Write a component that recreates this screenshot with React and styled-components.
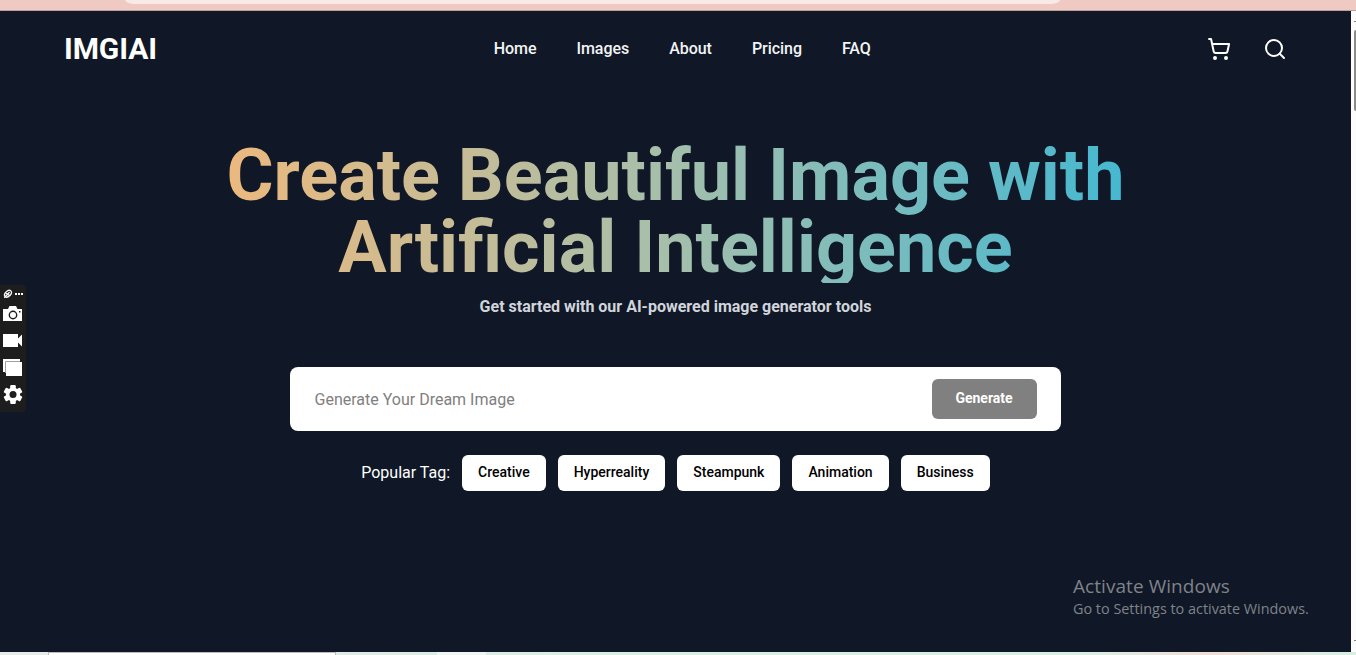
import React from "react";
import styled, { createGlobalStyle } from "styled-components";
import { ShoppingCart, Search } from "lucide-react";

const GlobalStyle = createGlobalStyle`
  *, *::before, *::after { box-sizing: border-box; }
  html, body { margin: 0; padding: 0; overflow: hidden; }
  body { background: #101726; font-family: Roboto, "Liberation Sans", sans-serif; }
  button, input { font-family: inherit; margin: 0; }
`;

const Screen = styled.div`
  position: relative;
  display: flex;
  flex-direction: column;
  width: 1356px;
  height: 655px;
  overflow: hidden;
`;

const BrowserBar = styled.div`
  flex: none;
  height: 11px;
  padding-left: 125px;
  background: #efcac2;
  border-bottom: 1px solid #bf9f99;
`;

const AddressField = styled.div`
  width: 935px;
  height: 4px;
  background: #f9e9e8;
  border-radius: 0 0 10px 10px / 0 0 4px 4px;
`;

const Viewport = styled.div`
  flex: 1;
  display: flex;
  min-height: 0;
`;

const Page = styled.div`
  width: 1351px;
  background: #101726;
`;

const Scrollbar = styled.div`
  flex: 1;
  display: flex;
  flex-direction: column;
  align-items: flex-end;
  background: #fcfcfc;
`;

const ScrollArrow = styled.div`
  width: 2px;
  height: 1px;
  margin: ${(p) => (p.$down ? "auto 0 11px" : "10px 0 0")};
  background: #858585;
`;

const ScrollThumb = styled.div`
  width: 2px;
  height: 81px;
  margin-top: 8px;
  background: #8b8b8b;
  border-radius: 2px 0 0 2px;
`;

const Header = styled.header`
  display: grid;
  grid-template-columns: 1fr auto 1fr;
  align-items: center;
  height: 76px;
  padding: 0 64px;
`;

const Logo = styled.div`
  color: #fff;
  font-size: 30px;
  line-height: 36px;
  font-weight: 700;
  letter-spacing: -0.1px;
`;

const Nav = styled.nav`
  display: flex;
  gap: 40px;
  margin-left: 13.5px;
`;

const NavLink = styled.a`
  color: #f3f4f6;
  font-size: 16px;
  line-height: 24px;
  font-weight: 500;
  letter-spacing: -0.04px;
`;

const Actions = styled.div`
  display: flex;
  justify-content: flex-end;
  gap: 32px;
  color: #fff;
`;

const Hero = styled.main`
  display: flex;
  flex-direction: column;
  align-items: center;
  padding-top: 52px;
`;

const Title = styled.h1`
  width: 900px;
  height: 144px;
  margin: 0;
  padding-top: 1px;
  font-size: 72px;
  line-height: 72px;
  font-weight: 700;
  text-align: center;
  color: transparent;
  background: linear-gradient(to right, #ecb97e, #a4bfac 50%, #45b8d1);
  background-clip: text;
  -webkit-background-clip: text;
`;

const Subtitle = styled.p`
  margin: 12px 0 0;
  color: #d1d5db;
  font-size: 16px;
  line-height: 24px;
  font-weight: 700;
`;

const Prompt = styled.form`
  display: flex;
  align-items: center;
  width: 771px;
  height: 64px;
  margin-top: 48px;
  padding: 0 24px;
  background: #fff;
  border-radius: 8px;
`;

const PromptInput = styled.input`
  flex: 1;
  height: 40px;
  padding: 0 0 0 0.5px;
  border: 0;
  outline: 0;
  background: transparent;
  font-size: 16px;
  &::placeholder { color: #808080; opacity: 1; }
`;

const GenerateButton = styled.button`
  width: 105px;
  height: 40px;
  padding: 0 1px 2px 0;
  border: 0;
  border-radius: 6px;
  background: #808080;
  color: #fff;
  font-size: 14px;
  font-weight: 700;
`;

const Tags = styled.div`
  display: flex;
  align-items: center;
  gap: 12px;
  margin-top: 24px;
`;

const TagsLabel = styled.span`
  color: #fff;
  font-size: 16px;
  line-height: 24px;
`;

const Tag = styled.button`
  height: 36px;
  padding: 0 16px 2px;
  border: 0;
  border-radius: 6px;
  background: #fff;
  color: #000;
  font-size: 14px;
  font-weight: 500;
`;

const Taskbar = styled.div`
  flex: none;
  display: flex;
  height: 3px;
  padding-left: 48px;
  background: linear-gradient(to right, #e6ebe7 0, #deece4 400px, #d9efe3 600px, #d9efe3 1080px, #f0ddd4 1215px, #d9efe3 1330px);
`;

const TaskWindow = styled.div`
  width: 288px;
  background: #fff;
  border: 1px solid #bcbcbc;
  border-bottom: 0;
`;

const TaskItem = styled.div`
  width: 49px;
  margin-left: 101px;
  background: #f0f6f2;
`;

const CaptureBar = styled.aside`
  position: absolute;
  left: 0;
  top: 285px;
  width: 26px;
  height: 127px;
  background: #1d1d1d;
  border-radius: 0 4px 4px 0;
  svg { display: block; }
`;

const Watermark = styled.div`
  position: absolute;
  left: 1073px;
  top: 573px;
  color: #7f838a;
  font-family: "Open Sans", "Noto Sans", sans-serif;
  white-space: nowrap;
`;

const WatermarkTitle = styled.div`
  font-size: 19px;
  line-height: 26px;
  letter-spacing: 0.06px;
`;

const WatermarkText = styled.div`
  font-size: 14.4px;
  line-height: 19px;
`;

function CaptureIcons() {
  return (
    <svg width="26" height="127" viewBox="0 0 26 127" fill="#fff">
      <g fill="none" stroke="#fff" strokeWidth="1.3">
        <ellipse cx="8" cy="8.7" rx="4" ry="2.6" transform="rotate(-45 8 8.7)" />
        <path d="M4.3 12.8 9.6 7M5 7.5l5 3.3" />
      </g>
      <rect x="15" y="8" width="2" height="2" />
      <rect x="18" y="8" width="2" height="2" />
      <rect x="21" y="8" width="2" height="2" />
      <path d="M3 24h5l1.5-3h6.5l1.5 3H22v12H3z" />
      <circle cx="13" cy="30" r="3.7" fill="none" stroke="#1d1d1d" strokeWidth="1.4" />
      <rect x="19" y="26" width="1.5" height="1.5" fill="#1d1d1d" />
      <path d="M3 49h15v4.5l4-4v12l-4-4V62H3z" />
      <path d="M3 74h17v3H6v10H3z" />
      <path d="M5.5 88V76.5H20" fill="none" stroke="#a0a0a0" strokeWidth="1" />
      <rect x="6" y="77" width="16" height="14" />
      <g transform="translate(13 109.5)">
        {[0, 60, 120].map((a) => (
          <rect key={a} x="-2.8" y="-9.5" width="5.6" height="19" rx="1.2" transform={`rotate(${a})`} />
        ))}
        <circle r="7" />
        <circle r="3.5" fill="#1d1d1d" />
      </g>
    </svg>
  );
}

const links = ["Home", "Images", "About", "Pricing", "FAQ"];
const tags = ["Creative", "Hyperreality", "Steampunk", "Animation", "Business"];

export default function App() {
  return (
    <Screen>
      <GlobalStyle />
      <BrowserBar><AddressField /></BrowserBar>
      <Viewport>
        <Page>
          <Header>
            <Logo>IMGIAI</Logo>
            <Nav>{links.map((l) => <NavLink key={l}>{l}</NavLink>)}</Nav>
            <Actions>
              <ShoppingCart size={24} />
              <Search size={24} />
            </Actions>
          </Header>
          <Hero>
            <Title>Create Beautiful Image with Artificial Intelligence</Title>
            <Subtitle>Get started with our AI-powered image generator tools</Subtitle>
            <Prompt>
              <PromptInput placeholder="Generate Your Dream Image" />
              <GenerateButton type="button">Generate</GenerateButton>
            </Prompt>
            <Tags>
              <TagsLabel>Popular Tag:</TagsLabel>
              {tags.map((t) => <Tag key={t}>{t}</Tag>)}
            </Tags>
          </Hero>
        </Page>
        <Scrollbar>
          <ScrollArrow />
          <ScrollThumb />
          <ScrollArrow $down />
        </Scrollbar>
      </Viewport>
      <Taskbar>
        <TaskWindow />
        <TaskItem />
      </Taskbar>
      <CaptureBar><CaptureIcons /></CaptureBar>
      <Watermark>
        <WatermarkTitle>Activate Windows</WatermarkTitle>
        <WatermarkText>Go to Settings to activate Windows.</WatermarkText>
      </Watermark>
    </Screen>
  );
}
